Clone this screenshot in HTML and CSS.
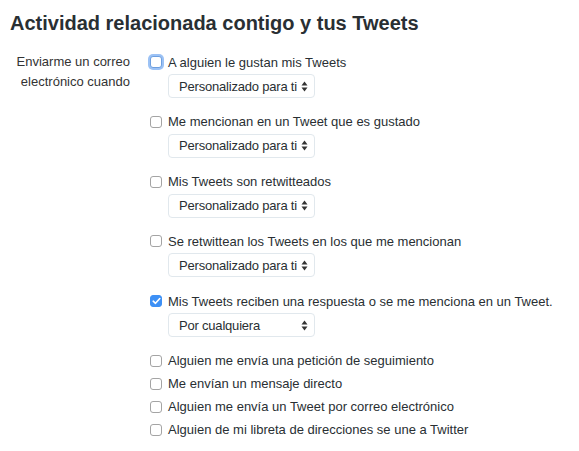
FILE: index.html
```html
<!DOCTYPE html>
<html lang="es">
<head>
  <meta charset="UTF-8" />
  <title>Notificaciones por correo</title>
  <link rel="stylesheet" href="styles.css">
</head>
<body>
  <div class="settings">
    <h2>Actividad relacionada contigo y tus Tweets</h2>

    <div class="control-group">
      <div class="control-label">Enviarme un correo electrónico cuando</div>

      <div class="controls">
        <div class="option">
          <label class="check"><span class="box focus"></span>A alguien le gustan mis Tweets</label>
          <div class="select">
            <span>Personalizado para ti</span>
            <svg width="7" height="11" viewBox="0 0 7 11"><path d="M3.5 0.5 L6.5 4.5 H0.5 Z M3.5 10.5 L6.5 6.5 H0.5 Z" fill="#333"/></svg>
          </div>
        </div>

        <div class="option">
          <label class="check"><span class="box"></span>Me mencionan en un Tweet que es gustado</label>
          <div class="select">
            <span>Personalizado para ti</span>
            <svg width="7" height="11" viewBox="0 0 7 11"><path d="M3.5 0.5 L6.5 4.5 H0.5 Z M3.5 10.5 L6.5 6.5 H0.5 Z" fill="#333"/></svg>
          </div>
        </div>

        <div class="option">
          <label class="check"><span class="box"></span>Mis Tweets son retwitteados</label>
          <div class="select">
            <span>Personalizado para ti</span>
            <svg width="7" height="11" viewBox="0 0 7 11"><path d="M3.5 0.5 L6.5 4.5 H0.5 Z M3.5 10.5 L6.5 6.5 H0.5 Z" fill="#333"/></svg>
          </div>
        </div>

        <div class="option">
          <label class="check"><span class="box"></span>Se retwittean los Tweets en los que me mencionan</label>
          <div class="select">
            <span>Personalizado para ti</span>
            <svg width="7" height="11" viewBox="0 0 7 11"><path d="M3.5 0.5 L6.5 4.5 H0.5 Z M3.5 10.5 L6.5 6.5 H0.5 Z" fill="#333"/></svg>
          </div>
        </div>

        <div class="option">
          <label class="check"><span class="box checked"><svg width="9" height="8" viewBox="0 0 9 8"><path d="M1.2 4.2 L3.5 6.3 L7.8 1.5" fill="none" stroke="#fff" stroke-width="1.6" stroke-linecap="round" stroke-linejoin="round"/></svg></span>Mis Tweets reciben una respuesta o se me menciona en un Tweet.</label>
          <div class="select">
            <span>Por cualquiera</span>
            <svg width="7" height="11" viewBox="0 0 7 11"><path d="M3.5 0.5 L6.5 4.5 H0.5 Z M3.5 10.5 L6.5 6.5 H0.5 Z" fill="#333"/></svg>
          </div>
        </div>

        <div class="option simple">
          <label class="check"><span class="box"></span>Alguien me envía una petición de seguimiento</label>
        </div>
        <div class="option simple">
          <label class="check"><span class="box"></span>Me envían un mensaje directo</label>
        </div>
        <div class="option simple">
          <label class="check"><span class="box"></span>Alguien me envía un Tweet por correo electrónico</label>
        </div>
        <div class="option simple">
          <label class="check"><span class="box"></span>Alguien de mi libreta de direcciones se une a Twitter</label>
        </div>
      </div>
    </div>
  </div>
</body>
</html>
```

FILE: styles.css
```css
* {
  margin: 0;
  padding: 0;
  box-sizing: border-box;
}

body {
  font-family: 'Liberation Sans', Arial, sans-serif;
  background-color: #ffffff;
  color: #292f33;
}

.settings {
  padding: 11px 10px 0 10px;
}

h2 {
  font-size: 20px;
  font-weight: bold;
  line-height: 24px;
  color: #292f33;
  margin-bottom: 17px;
}

.control-group {
  display: flex;
  gap: 20px;
}

.control-label {
  width: 120px;
  text-align: right;
  font-size: 13px;
  line-height: 20px;
  color: #333;
}

.controls {
  display: flex;
  flex-direction: column;
}

.option {
  margin-bottom: 13.8px;
}

.option.simple {
  margin-bottom: 3px;
}

.check {
  display: flex;
  align-items: center;
  height: 20px;
  font-size: 13px;
  white-space: nowrap;
  color: #292f33;
}

.box {
  flex-shrink: 0;
  width: 12px;
  height: 12px;
  margin-right: 6px;
  border: 1px solid #a4a4a4;
  border-radius: 3px;
  background-color: #fff;
  display: flex;
  align-items: center;
  justify-content: center;
}

.box.focus {
  border-color: #6d9fe0;
  box-shadow: 0 0 0 2px #9cc2f5;
}

.box.checked {
  border-color: #3d90f5;
  background-color: #3d90f5;
}

.select {
  margin-top: 2px;
  margin-left: 18px;
  width: 147px;
  height: 24px;
  padding: 0 6px 0 10px;
  border: 1px solid #e1e8ed;
  border-radius: 4px;
  background-color: #fff;
  display: flex;
  align-items: center;
  justify-content: space-between;
  font-size: 13px;
  letter-spacing: -0.2px;
  white-space: nowrap;
  color: #292f33;
}

.select svg {
  flex-shrink: 0;
}
```
